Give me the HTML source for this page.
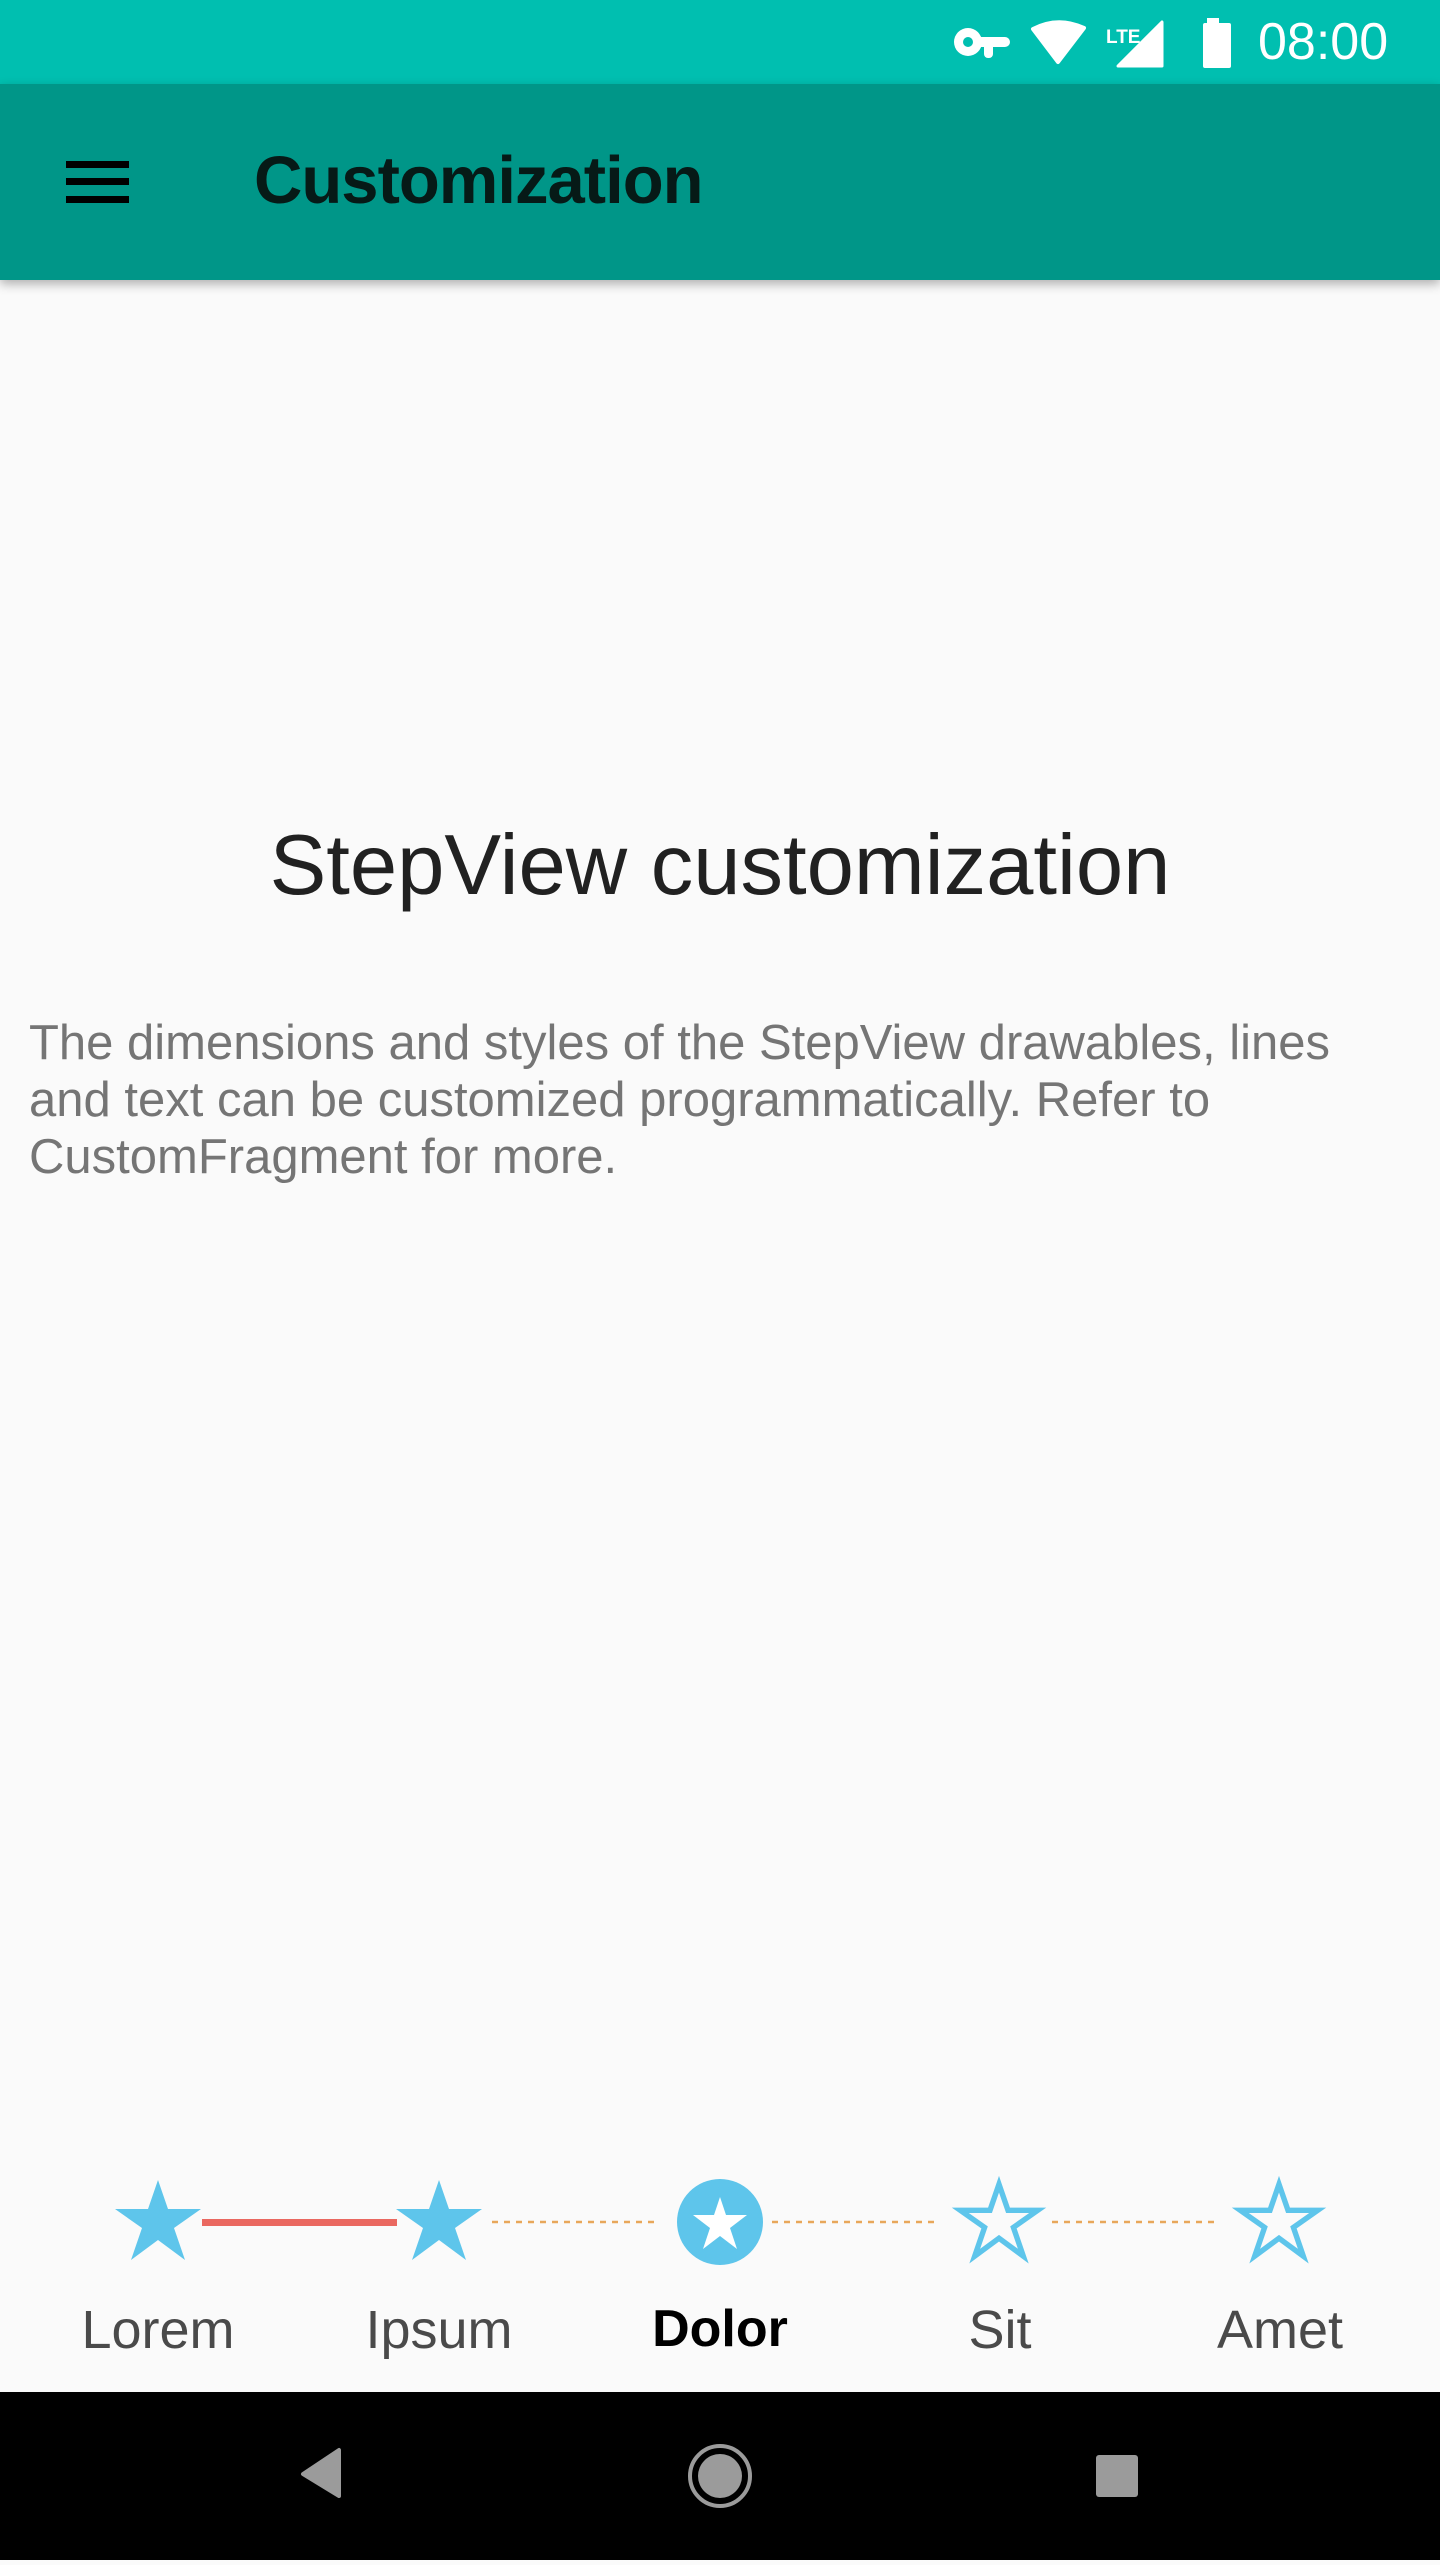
<!DOCTYPE html>
<html><head><meta charset="utf-8"><style>
*{margin:0;padding:0;box-sizing:border-box}
body{width:1440px;height:2560px;background:#fafafa;position:relative;overflow:hidden;font-family:"Liberation Sans",sans-serif}
.abs{position:absolute}
#status{left:0;top:0;width:1440px;height:84px;background:#00bfb0}
#bar{left:0;top:84px;width:1440px;height:196px;background:#009688;box-shadow:0 4px 10px rgba(0,0,0,.3)}
#title{left:254px;top:147px;font-size:67px;color:#061a17;line-height:1;font-weight:bold;letter-spacing:-1px}
.mi{left:66px;width:63px;height:7px;background:#000}
#h{left:0;width:1440px;top:823px;text-align:center;font-size:85px;color:#212121;line-height:1}
#p{left:29px;top:1015px;width:1350px;font-size:49px;line-height:57px;color:#757575}
.lbl{top:2303px;width:280px;text-align:center;font-size:54px;color:#4a4a4a;line-height:1}
#nav{left:0;top:2392px;width:1440px;height:168px;background:#000}
</style></head><body>
<div id="status" class="abs">
<svg class="abs" style="left:950px;top:18px" width="420" height="50" viewBox="0 0 420 50">
<circle cx="18" cy="24" r="14" fill="#fff"/><circle cx="18" cy="24" r="5" fill="#00bfb0"/>
<rect x="26" y="19" width="34" height="10" rx="5" fill="#fff"/><rect x="34" y="22" width="9" height="18" rx="4" fill="#fff"/>
<path d="M83 11 Q108 -2 134 10 L108 44 Z" fill="#fff" stroke="#fff" stroke-width="4" stroke-linejoin="round"/>
<text x="156" y="25" font-size="19" font-weight="bold" fill="#fff" font-family="Liberation Sans">LTE</text>
<path d="M168 48 L212 4 L212 48 Z" fill="#fff" stroke="#fff" stroke-width="3" stroke-linejoin="round"/>
<rect x="257" y="0" width="12" height="6" fill="#fff"/><rect x="253" y="5" width="28" height="45" rx="2" fill="#fff"/>
</svg>
<div class="abs" style="left:1258px;top:16px;font-size:52px;color:#fff;line-height:1">08:00</div>
</div>
<div id="bar" class="abs"></div>
<div class="abs mi" style="top:161px"></div><div class="abs mi" style="top:178px"></div><div class="abs mi" style="top:196px"></div>
<div id="title" class="abs">Customization</div>
<div id="h" class="abs">StepView customization</div>
<div id="p" class="abs">The dimensions and styles of the StepView drawables, lines and text can be customized programmatically. Refer to CustomFragment for more.</div>
<svg class="abs" style="left:0;top:2160px" width="1440" height="130" viewBox="0 0 1440 130">
<defs><path id="st" d="M0,-42 L10,-13 L43,-13 L16,6 L27,38 L0,18 L-27,38 L-16,6 L-43,-13 L-10,-13 Z"/></defs>
<rect x="202" y="59" width="195" height="7" fill="#ea6860"/>
<g stroke="#e8a75a" stroke-width="2.5" stroke-dasharray="6 6"><line x1="492" y1="62" x2="660" y2="62"/><line x1="772" y1="62" x2="940" y2="62"/><line x1="1052" y1="62" x2="1220" y2="62"/></g>
<use href="#st" x="158" y="62" fill="#5ec5eb"/>
<use href="#st" x="439" y="62" fill="#5ec5eb"/>
<circle cx="720" cy="62" r="43" fill="#5ec5eb"/>
<path d="M0,-27 L6,-9 L27,-9 L10,4 L17,25 L0,12 L-17,25 L-10,4 L-27,-9 L-6,-9 Z" transform="translate(720,64)" fill="#fff"/>
<use href="#st" x="999" y="62" fill="none" stroke="#5ec5eb" stroke-width="6" transform="translate(999,62) scale(.9) translate(-999,-62)"/>
<use href="#st" x="1279" y="62" fill="none" stroke="#5ec5eb" stroke-width="6" transform="translate(1279,62) scale(.9) translate(-1279,-62)"/>
</svg>
<div class="abs lbl" style="left:18px">Lorem</div>
<div class="abs lbl" style="left:299px">Ipsum</div>
<div class="abs lbl" style="left:580px;color:#000;font-weight:bold;font-size:52px">Dolor</div>
<div class="abs lbl" style="left:860px">Sit</div>
<div class="abs lbl" style="left:1140px">Amet</div>
<div id="nav" class="abs">
<svg width="1440" height="168" viewBox="0 0 1440 168">
<path d="M339 58 L339 104 L303 82 Z" fill="#9b9b9b" stroke="#9b9b9b" stroke-width="4" stroke-linejoin="round"/>
<circle cx="720" cy="84" r="30" fill="none" stroke="#9b9b9b" stroke-width="4"/>
<circle cx="720" cy="84" r="22" fill="#9b9b9b"/>
<rect x="1096" y="63" width="42" height="42" rx="3" fill="#9b9b9b"/>
</svg>
</div>
</body></html>
